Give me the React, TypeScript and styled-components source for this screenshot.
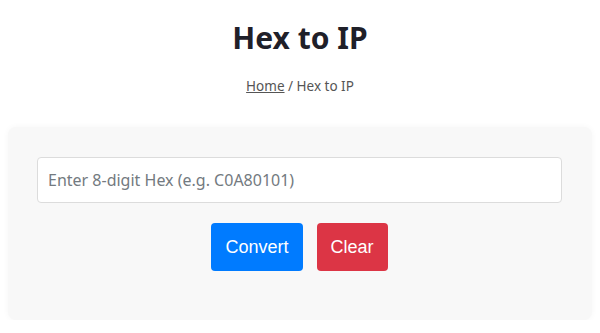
import React, { useState } from "react";
import styled, { createGlobalStyle } from "styled-components";

const GlobalStyle = createGlobalStyle`
  body {
    margin: 0;
    background: #fff;
    font-family: "Segoe UI", "Noto Sans", "Open Sans", sans-serif;
    color: #212529;
  }
`;

export default function App() {
  const [hex, setHex] = useState("");

  return (
    <>
      <GlobalStyle />
      <Page>
        <Header>
          <Title>Hex to IP</Title>
          <Breadcrumb>
            <Crumb href="#">Home</Crumb> / Hex to IP
          </Breadcrumb>
        </Header>

        <Card>
          <Input
            type="text"
            placeholder="Enter 8-digit Hex (e.g. C0A80101)"
            value={hex}
            onChange={(e) => setHex(e.target.value)}
          />
          <ButtonGroup>
            <Button $variant="primary">Convert</Button>
            <Button $variant="danger" onClick={() => setHex("")}>
              Clear
            </Button>
          </ButtonGroup>
        </Card>
      </Page>
    </>
  );
}

const Page = styled.div`
  padding: 0 8px;
`;

const Header = styled.header`
  text-align: center;
  padding-top: 18px;
  padding-bottom: 31px;
`;

const Title = styled.h1`
  margin: 0;
  font-size: 30px;
  font-weight: 700;
  line-height: 40px;
  color: #1f2029;
`;

const Breadcrumb = styled.div`
  margin-top: 18px;
  font-size: 13.5px;
  line-height: 20px;
  color: #555;
`;

const Crumb = styled.a`
  color: #555;
  text-decoration: underline;
`;

const Card = styled.div`
  background: #f8f8f8;
  border-radius: 8px;
  box-shadow: 0 0 6px rgba(0, 0, 0, 0.04);
  padding: 30px 30px 49px 29px;
`;

const Input = styled.input`
  display: block;
  box-sizing: border-box;
  width: 100%;
  height: 46px;
  padding: 0 10px;
  border: 1px solid #dcdcdc;
  border-radius: 4px;
  background: #fff;
  font-family: "Segoe UI", "Noto Sans", sans-serif;
  font-size: 16px;
  color: #212529;
  outline: none;

  &::placeholder {
    color: #737a80;
  }
`;

const ButtonGroup = styled.div`
  display: flex;
  justify-content: center;
  gap: 14px;
  margin-top: 20px;
`;

const Button = styled.button<{ $variant: "primary" | "danger" }>`
  height: 48px;
  padding: 0 14px;
  border: none;
  border-radius: 4px;
  font-family: "Liberation Sans", Arial, sans-serif;
  font-size: 18px;
  color: #fff;
  cursor: pointer;
  background: ${(p) => (p.$variant === "primary" ? "#007bff" : "#dc3545")};
`;
